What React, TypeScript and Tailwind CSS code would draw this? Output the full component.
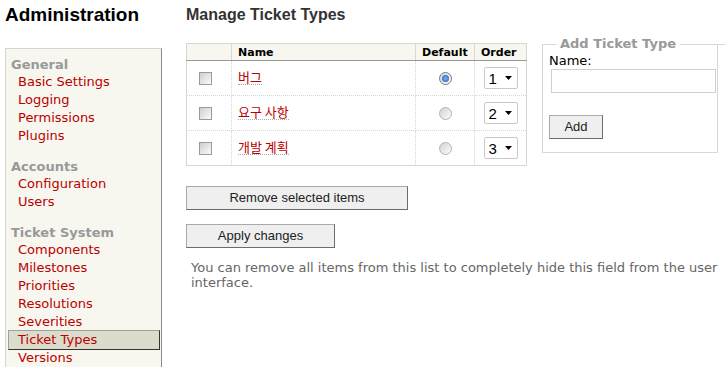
import React from "react";

const groups = [
  { title: "General", items: ["Basic Settings", "Logging", "Permissions", "Plugins"] },
  { title: "Accounts", items: ["Configuration", "Users"] },
  {
    title: "Ticket System",
    items: ["Components", "Milestones", "Priorities", "Resolutions", "Severities", "Ticket Types", "Versions"],
  },
];

const rows = [
  { name: "버그", order: "1", def: true },
  { name: "요구 사항", order: "2", def: false },
  { name: "개발 계획", order: "3", def: false },
];

function Checkbox() {
  return (
    <span className="inline-block w-[13px] h-[13px] border border-[#9a9a9a] bg-linear-to-br from-[#cfcfcf] to-[#fbfbfb] align-middle" />
  );
}

function Radio({ checked }: { checked: boolean }) {
  if (checked) {
    return (
      <span className="inline-flex items-center justify-center w-[13px] h-[13px] rounded-full border border-[#7a7a7a] bg-linear-to-br from-[#d0d0d0] to-[#ffffff] align-middle">
        <span className="block w-[7px] h-[7px] rounded-full bg-radial from-[#7fb4f5] to-[#1c56b0]" />
      </span>
    );
  }
  return (
    <span className="inline-block w-[13px] h-[13px] rounded-full border border-[#b4b4b4] bg-linear-to-br from-[#d2d2d2] to-[#fdfdfd] align-middle" />
  );
}

function FakeSelect({ value }: { value: string }) {
  return (
    <div className="w-[34px] h-[22px] border border-[#c9c9c9] rounded-[2px] bg-white flex items-center pl-[4px] pr-[5px] font-['Liberation_Sans',Arial,sans-serif] text-[15px] leading-[15px] text-black">
      <span className="flex-1">{value}</span>
      <svg width="7" height="4" viewBox="0 0 7 4">
        <path d="M0 0 H7 L3.5 4 Z" fill="#000" />
      </svg>
    </div>
  );
}

const btn =
  "block h-[24px] bg-[#efefef] border border-[#a9a9a9] border-r-[#6b6b6b] border-b-[#6b6b6b] font-['Liberation_Sans',Arial,sans-serif] text-[13px] leading-[16px] text-[#222]";

const th =
  "border border-[#d7d7d7] border-b-[#999] px-[6px] pt-[2px] pb-[1px] text-[11px] leading-[13px] font-bold text-left";

export default function App() {
  return (
    <div className="w-[727px] h-[367px] overflow-hidden bg-white flex font-['DejaVu_Sans',Verdana,sans-serif] text-[13px] text-black">
      <div className="w-[186px] shrink-0">
        <h1 className="pl-[5px] pt-[4px] text-[19px] leading-[22px] font-bold font-['Liberation_Sans',Arial,sans-serif] text-black">
          Administration
        </h1>
        <nav className="mt-[22px] ml-[5px] w-[157px] h-[400px] border border-[#d4d4d4] border-r-[#8a8a8a] bg-[#f7f7f0] pt-[7px]">
          {groups.map((g) => (
            <div key={g.title} className="flex flex-col mb-[12px]">
              <div className="pl-[5px] leading-[18px] font-bold text-[#999]">{g.title}</div>
              {g.items.map((it) => {
                const active = it === "Ticket Types";
                return (
                  <a
                    key={it}
                    href="#"
                    className={
                      active
                        ? "block -mt-[2px] ml-[2px] mr-[1px] pl-[9px] leading-[18px] border border-[#a0a0a0] border-r-[#333] border-b-[#333] bg-[#dcdccc] text-[#b00]"
                        : "block -mt-[2px] ml-[2px] mr-[1px] pl-[9px] leading-[18px] border border-transparent text-[#b00]"
                    }
                  >
                    {it}
                  </a>
                );
              })}
            </div>
          ))}
        </nav>
      </div>

      <div className="flex-1 min-w-0">
        <h2 className="pt-[6px] text-[16px] leading-[18px] font-bold text-[#333] font-['Liberation_Sans',Arial,sans-serif]">
          Manage Ticket Types
        </h2>
        <div className="flex items-start">
          <div className="w-[340px] shrink-0 mt-[19px]">
            <table className="w-[340px] table-fixed border-collapse border border-[#d7d7d7]">
              <colgroup>
                <col className="w-[45px]" />
                <col className="w-[184px]" />
                <col className="w-[59px]" />
                <col className="w-[52px]" />
              </colgroup>
              <thead className="bg-[#f7f7f0]">
                <tr>
                  <th className={th}></th>
                  <th className={th}>Name</th>
                  <th className={th}>Default</th>
                  <th className={th}>Order</th>
                </tr>
              </thead>
              <tbody>
                {rows.map((r) => (
                  <tr key={r.order}>
                    <td className="h-[35px] border border-dotted border-[#d7d7d7] pl-[12px] align-middle">
                      <Checkbox />
                    </td>
                    <td className="h-[35px] border border-dotted border-[#d7d7d7] pl-[6px] align-middle">
                      <a
                        href="#"
                        className="inline-block text-[#b00] border-b border-dotted border-[#aaa] text-[13px] leading-[15px] font-['Noto_Sans_CJK_KR',sans-serif]"
                      >
                        {r.name}
                      </a>
                    </td>
                    <td className="h-[35px] border border-dotted border-[#d7d7d7] text-center align-middle">
                      <Radio checked={r.def} />
                    </td>
                    <td className="h-[35px] border border-dotted border-[#d7d7d7] align-middle">
                      <div className="flex justify-center">
                        <FakeSelect value={r.order} />
                      </div>
                    </td>
                  </tr>
                ))}
              </tbody>
            </table>
            <button className={btn + " mt-[20px] w-[222px]"}>Remove selected items</button>
            <button className={btn + " mt-[14px] w-[149px]"}>Apply changes</button>
          </div>

          <div className="relative ml-[16px] mt-[11px]">
            <fieldset className="w-[176px] min-w-0 border border-[#d7d7d7] px-[6px] pb-[13px]">
              <legend className="ml-[7px] px-[4px] font-bold text-[#999] leading-[18px]">Add Ticket Type</legend>
              <label className="block leading-[16px] text-black">Name:</label>
              <input className="block ml-[2px] w-[165px] h-[24px] border border-[#cfcfcf] bg-white" />
              <button className={btn + " mt-[22px] w-[54px]"}>Add</button>
            </fieldset>
            <div className="absolute top-[9px] left-[176px] w-[7px] h-px bg-[#d7d7d7]" />
          </div>
        </div>
        <p className="mt-[12px] ml-[5px] mr-[6px] text-[13px] leading-[15px] text-[#666]">
          You can remove all items from this list to completely hide this field from the user interface.
        </p>
      </div>
    </div>
  );
}
